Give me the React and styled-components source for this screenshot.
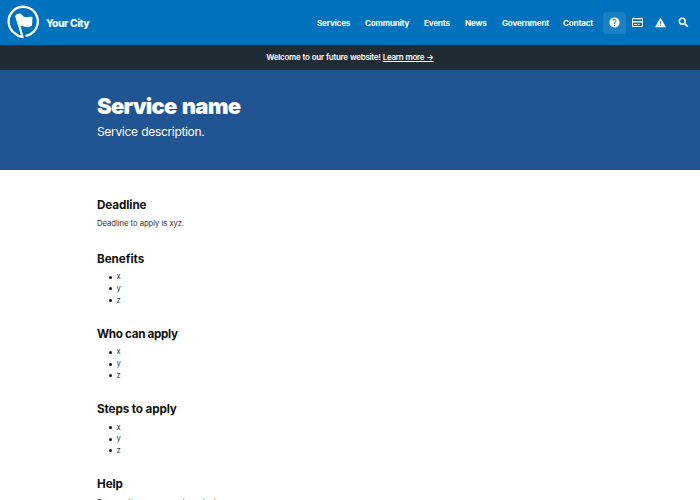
import React from 'react';
import styled, { createGlobalStyle } from 'styled-components';

const Global = createGlobalStyle`
  * { box-sizing: border-box; }
  html, body { margin: 0; height: 500px; overflow: hidden; background: #fff; }
  body { font-family: Inter, "Liberation Sans", sans-serif; color: #1b1b1b; }
  h1, h2, p, ul { margin: 0; padding: 0; }
`;

const Header = styled.header`
  height: 45px;
  padding: 0 5px 0 7px;
  display: flex;
  align-items: center;
  justify-content: space-between;
  background: #0071bc;
  color: #fff;
`;
const Brand = styled.a`
  display: flex;
  align-items: center;
  gap: 7px;
  font-size: 10.3px;
  font-weight: 800;
  letter-spacing: -0.48px;
  word-spacing: 0.4px;
  white-space: nowrap;
`;
const Logo = styled.svg`
  width: 32px;
  height: 34px;
  margin-top: -1px;
  display: block;
`;
const Nav = styled.nav`
  display: flex;
  align-items: center;
`;
const NavLink = styled.a`
  width: ${(p) => p.$width}px;
  font-size: 8.1px;
  line-height: 12px;
  font-weight: 700;
  letter-spacing: -0.2px;
  white-space: nowrap;
`;
const IconButton = styled.a`
  width: 23px;
  height: 22px;
  display: flex;
  align-items: center;
  justify-content: center;
  border-radius: 4px;
  background: ${(p) => (p.$active ? '#1b80c3' : 'transparent')};
`;
const Icon = styled.svg`
  width: 11px;
  height: 11px;
  display: block;
`;
const Banner = styled.div`
  height: 25px;
  padding-bottom: 1px;
  display: flex;
  align-items: center;
  justify-content: center;
  background: #212b33;
  color: #fff;
  font-size: 8px;
  font-weight: 600;
  letter-spacing: -0.28px;
  word-spacing: 0.4px;
  white-space: pre;
`;
const BannerLink = styled.a`
  text-decoration: underline;
  text-underline-offset: 1px;
  text-decoration-thickness: 1px;
`;
const Hero = styled.section`
  height: 100px;
  padding: 22px 97px 0;
  background: #205493;
  border-bottom: 1px solid #174d91;
  color: #fff;
`;
const Title = styled.h1`
  font-size: 22px;
  line-height: 28px;
  font-weight: 900;
  letter-spacing: -0.75px;
  word-spacing: 1.5px;
`;
const Description = styled.p`
  && { margin-top: 3px; }
  font-size: 12px;
  line-height: 18px;
  font-weight: 400;
  letter-spacing: -0.33px;
  word-spacing: 0.6px;
`;
const Main = styled.main`
  padding: 26.7px 97px 0;
`;
const Section = styled.section`
  height: ${(p) => p.$height}px;
`;
const Heading = styled.h2`
  font-size: 11.7px;
  line-height: 17px;
  font-weight: 700;
  letter-spacing: ${(p) => p.$spacing || -0.1}px;
  color: #111;
`;
const Text = styled.p`
  && { padding-top: 4px; }
  font-size: 7.7px;
  line-height: 12px;
  letter-spacing: -0.05px;
  color: #333;
  white-space: nowrap;
`;
const List = styled.ul`
  && { padding: 3.6px 0 0 12px; }
  list-style: none;
`;
const Item = styled.li`
  height: 11.7px;
  display: flex;
  align-items: center;
  gap: 4.6px;
  font-size: 7.7px;
  line-height: 11.7px;
  color: #333;
  &::before {
    content: '';
    width: 3px;
    height: 3px;
    border-radius: 50%;
    background: #111;
  }
`;

const links = [
  ['Services', 48],
  ['Community', 59],
  ['Events', 41],
  ['News', 37],
  ['Government', 61],
  ['Contact', 40],
];
const sections = [
  ['Benefits', -0.05],
  ['Who can apply', -0.33],
  ['Steps to apply', -0.12],
];

export default function App() {
  return (
    <>
      <Global />
      <Header>
        <Brand>
          <Logo viewBox="0 0 32 34" fill="none">
            <path d="M18.6 30.8A14.6 14.6 0 1 0 8.2 28.6C10.3 30.5 12.8 31.8 15.6 32.2L9.4 11" stroke="#fff" strokeWidth="2.3" strokeLinejoin="round" />
            <path d="M8.2 10.7C10 9 11.6 8.1 13.4 8.6C15 9.3 15.6 11.6 17.4 12C20 12.6 22.8 11.2 25.5 12L25 20.5C22.5 22.4 20 22.5 17.6 21.7C15.5 20.9 13.8 20.6 11.6 21.8Z" fill="#fff" />
          </Logo>
          Your City
        </Brand>
        <Nav>
          {links.map(([label, width]) => (
            <NavLink key={label} $width={width}>{label}</NavLink>
          ))}
          <IconButton $active aria-label="Help">
            <Icon viewBox="1 1 22 22" fill="#fff">
              <path d="M12 2C6.48 2 2 6.48 2 12s4.48 10 10 10 10-4.48 10-10S17.52 2 12 2zm1 17h-2v-2h2v2zm2.07-7.75-.9.92C13.45 12.9 13 13.5 13 15h-2v-.5c0-1.1.45-2.1 1.17-2.83l1.24-1.26c.37-.36.59-.86.59-1.41 0-1.1-.9-2-2-2s-2 .9-2 2H8c0-2.21 1.79-4 4-4s4 1.79 4 4c0 .88-.36 1.68-.93 2.25z" />
            </Icon>
          </IconButton>
          <IconButton aria-label="Payments">
            <Icon viewBox="1 1 22 22" fill="#fff">
              <path fillRule="evenodd" d="M3 3h18a2 2 0 0 1 2 2v14a2 2 0 0 1-2 2H3a2 2 0 0 1-2-2V5a2 2 0 0 1 2-2zm0 2.5V9h18V5.500zM3 12v7h18v-7zm2 3h6v2H5zm8 0h3v2h-3z" />
            </Icon>
          </IconButton>
          <IconButton aria-label="Alerts">
            <Icon viewBox="1 1 22 22" fill="#fff">
              <path d="M1 21.500h22L12 2 1 21.500zm12-3h-2v-2h2v2zm0-4h-2v-5h2v5z" />
            </Icon>
          </IconButton>
          <IconButton aria-label="Search">
            <Icon viewBox="1 1 22 22" fill="none" stroke="#fff">
              <circle cx="9.500" cy="9.500" r="5.800" strokeWidth="3" />
              <path d="m14 14 6.500 6.500" strokeWidth="3.500" />
            </Icon>
          </IconButton>
        </Nav>
      </Header>
      <Banner>
        {'Welcome to our future website! '}
        <BannerLink>Learn more →</BannerLink>
      </Banner>
      <Hero>
        <Title>Service name</Title>
        <Description>Service description.</Description>
      </Hero>
      <Main>
        <Section $height={54}>
          <Heading>Deadline</Heading>
          <Text>Deadline to apply is xyz.</Text>
        </Section>
        {sections.map(([name, spacing]) => (
          <Section key={name} $height={75.2}>
            <Heading $spacing={spacing}>{name}</Heading>
            <List>
              {['x', 'y', 'z'].map((item) => <Item key={item}>{item}</Item>)}
            </List>
          </Section>
        ))}
        <Section $height={40}>
          <Heading>Help</Heading>
          <Text>For questions or support, contact:</Text>
        </Section>
      </Main>
    </>
  );
}
